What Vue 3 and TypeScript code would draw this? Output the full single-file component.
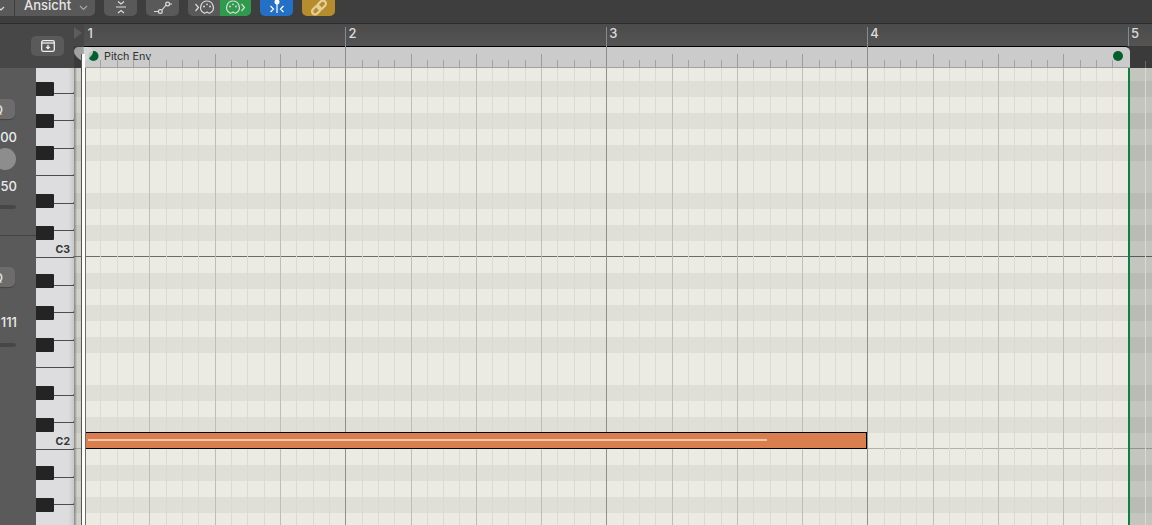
<script setup lang="ts">
const START = 84.6
const STEP = 16.32
const CANVAS_X = 74
const CANVAS_Y = 68

const gridX = (i: number) => Math.floor(START + STEP * i)

// 16th lines in the note grid, the one at index 64 is the green end marker
const gridLines = Array.from({ length: 66 }, (_, i) => i)
  .filter((i) => i !== 64)
  .map((i) => ({
    i,
    left: gridX(i) - CANVAS_X,
    kind: i % 16 === 0 ? 'bar' : i % 4 === 0 ? 'beat' : 'sixteenth',
  }))

const headerTicks = Array.from({ length: 63 }, (_, i) => i + 1).map((i) => ({
  i,
  left: gridX(i) - 84,
  kind: i % 16 === 0 ? 'bar' : i % 4 === 0 ? 'beat' : 'sixteenth',
}))

const DARK_ROWS = [1, 3, 6, 8, 10]
const rows = Array.from({ length: 29 }, (_, i) => {
  const y = 65 + i * 16
  const n = (((257 - y - 16) / 16) % 12 + 12) % 12
  const top = Math.max(y, CANVAS_Y)
  const bottom = Math.min(y + 16, 525)
  return {
    y,
    height: bottom - top,
    dark: DARK_ROWS.includes(n),
    c3: y === 241,
    c2: y === 433,
  }
})

const keyLines = [93, 120, 148, 175, 203, 230, 257, 285, 312, 340, 367, 395, 422, 449, 477, 504]
const labels: Record<number, string> = { 257: 'C3', 449: 'C2' }
const whiteKeys = keyLines.map((line, i) => ({
  line,
  height: line + 1 - (i === 0 ? CANVAS_Y : keyLines[i - 1] + 1),
  label: labels[line] ?? '',
}))
const lastKeyHeight = 525 - 505

const blackKeys = [82, 114, 146, 194, 226, 274, 306, 338, 386, 418, 466, 498].map((y) => y - CANVAS_Y)
const bars = ['1', '2', '3', '4', '5']
const plugPath = 'M-3 5.500C-6 4-7 1-6-2C-5-5-2.500-6.500 0-6.500C2.500-6.500 5-5 6-2C7 1 6 4 3 5.500C2 6.200 1 5 0 4.500C-1 5-2 6.200-3 5.500z'
</script>

<template>
  <div class="app">
    <header class="toolbar">
      <div class="btn-group view-group">
        <div class="seg seg-prev">
          <svg width="8" height="5" viewBox="0 0 8 5"><path d="M1 1l3 3 3-3" class="ic" /></svg>
        </div>
        <div class="seg seg-view">
          <span>Ansicht</span>
          <svg width="9" height="6" viewBox="0 0 9 6"><path d="M1 1l3.500 3.500L8 1" class="ic dim" /></svg>
        </div>
      </div>

      <button class="btn">
        <svg width="16" height="16" viewBox="0 0 16 16">
          <path d="M5 1.500l3 2.500 3-2.500M3 7h10M5 13l3-2.500 3 2.500" class="ic" />
        </svg>
      </button>
      <button class="btn">
        <svg width="20" height="14" viewBox="0 0 20 14">
          <path d="M1 10.500h4.500M9 9l4-5M16.500 3H19" class="ic" />
          <circle cx="7.300" cy="10.500" r="1.900" class="ic" />
          <circle cx="14.600" cy="3" r="1.900" class="ic" />
        </svg>
      </button>

      <div class="btn-group">
        <div class="seg seg-midi">
          <svg width="32" height="16" viewBox="0 0 32 16">
            <path d="M7.500 4l3 3.500-3 3.500" class="ic" />
            <g transform="translate(19 7.500)">
              <path :d="plugPath" class="ic" />
              <circle cx="-3" cy="-1" r="0.900" class="dot" />
              <circle cx="0" cy="-3.200" r="0.900" class="dot" />
              <circle cx="3" cy="-1" r="0.900" class="dot" />
            </g>
          </svg>
        </div>
        <div class="seg seg-green">
          <svg width="31" height="16" viewBox="0 0 31 16">
            <g transform="translate(13 7.500)">
              <path :d="plugPath" class="ic" />
              <circle cx="-3" cy="-1" r="0.900" class="dot" />
              <circle cx="0" cy="-3.200" r="0.900" class="dot" />
              <circle cx="3" cy="-1" r="0.900" class="dot" />
            </g>
            <path d="M21.500 4l3 3.500-3 3.500" class="ic" />
          </svg>
        </div>
      </div>

      <button class="btn btn-blue">
        <svg width="16" height="16" viewBox="0 0 16 16">
          <circle cx="8" cy="2" r="2.500" class="dot white" />
          <path d="M8 3v10M1.500 6l3 3-3 3M14.500 6l-3 3 3 3" class="ic white" />
        </svg>
      </button>
      <button class="btn btn-gold">
        <svg width="20" height="16" viewBox="0 0 20 16">
          <g transform="rotate(-45 10 7.500)" class="link">
            <rect x="1.500" y="4.500" width="9.500" height="6" rx="3" />
            <rect x="9" y="4.500" width="9.500" height="6" rx="3" />
          </g>
        </svg>
      </button>
    </header>

    <section class="top-row">
      <div class="top-left">
        <button class="tray-btn">
          <svg width="14" height="12" viewBox="0 0 14 12">
            <rect x="0.700" y="0.700" width="12.600" height="10.600" rx="1.500" class="ic strong" />
            <path d="M1 3h12" class="ic strong" />
            <path d="M7 4.800v3.700M5.200 6.900L7 8.700l1.800-1.800" class="ic strong" />
          </svg>
        </button>
        <i class="cycle-arrow" />
        <i class="corner" />
      </div>
      <div class="top-right">
        <div class="ruler">
          <div v-for="b in bars" :key="b" class="ruler-cell" :class="{ first: b === '1' }">{{ b }}</div>
        </div>
        <div class="region-row">
          <div class="region">
            <span class="region-dot end" />
            <span class="region-name">Pitch Env</span>
            <i
              v-for="t in headerTicks"
              :key="t.i"
              class="tick"
              :class="t.kind"
              :style="{ left: t.left + 'px' }"
            />
          </div>
          <i class="outside-tick" />
        </div>
      </div>
    </section>

    <section class="body-row">
      <aside class="sidebar">
        <div class="q-btn"><span>Q</span></div>
        <div class="value first-value">00</div>
        <div class="knob" />
        <div class="value second-value">50</div>
        <div class="slider" />
        <div class="divider" />
        <div class="q-btn second-q"><span>Q</span></div>
        <div class="value third-value">111</div>
        <div class="slider last-slider" />
      </aside>

      <div class="keyboard">
        <div
          v-for="k in whiteKeys"
          :key="k.line"
          class="white-key"
          :style="{ height: k.height + 'px' }"
        >
          <span v-if="k.label" class="key-label">{{ k.label }}</span>
        </div>
        <div class="white-key last" :style="{ height: lastKeyHeight + 'px' }" />
        <div v-for="y in blackKeys" :key="y" class="black-key" :style="{ top: y + 'px' }" />
      </div>

      <div class="canvas">
        <div
          v-for="r in rows"
          :key="r.y"
          class="row"
          :class="{ dark: r.dark, c3: r.c3, c2: r.c2 }"
          :style="{ height: r.height + 'px' }"
        />
        <i class="gutter" />
        <i class="outside" />
        <i
          v-for="l in gridLines"
          :key="l.i"
          class="vline"
          :class="l.kind"
          :style="{ left: l.left + 'px' }"
        />
        <i class="end-line" />
        <div class="note"><i class="note-pitch" /></div>
      </div>
    </section>

    <svg class="playhead" width="26" height="478" viewBox="0 0 26 478">
      <circle cx="19.500" cy="9" r="5" fill="#00612f" />
      <path d="M0 4.500C0 2 2 0 4.500 0h10C17 0 19 2 19 4.500c0 4-5 7.500-9.500 11C5 12 0 8.500 0 4.500z" fill="#c4c4c4" fill-opacity="0.75" />
      <path d="M9.500 0h5C17 0 19 2 19 4.500c0 4-5 7.500-9.500 11z" fill="#e8e8e8" fill-opacity="0.45" />
      <rect x="7" y="7" width="1" height="471" fill="#55554f" />
      <rect x="8" y="7" width="3" height="471" fill="#fff" />
      <rect x="11" y="21" width="1" height="457" fill="#6c6c68" />
    </svg>
  </div>
</template>

<style>
html,
body {
  margin: 0;
  background: #3d3d3d;
}
</style>

<style scoped>
.app {
  position: relative;
  width: 1152px;
  height: 525px;
  overflow: hidden;
  display: flex;
  flex-direction: column;
  font-family: Inter, "Liberation Sans", sans-serif;
  background: #3d3d3d;
  color: #e6e6e6;
}

.toolbar {
  flex: 0 0 24px;
  box-sizing: border-box;
  display: flex;
  gap: 9px;
  border-bottom: 1px solid #2b2b2b;
  background: #3e3e3e;
}

.btn-group {
  display: flex;
  height: 16px;
  border-radius: 0 0 5px 5px;
  overflow: hidden;
}

.view-group {
  margin-left: -20px;
  gap: 1px;
}

.seg {
  height: 16px;
  display: flex;
  align-items: center;
  justify-content: center;
  background: #595959;
}

.seg-prev {
  width: 34px;
  justify-content: flex-end;
  padding-right: 9px;
  box-sizing: border-box;
}

.seg-view {
  width: 80px;
  box-sizing: border-box;
  justify-content: space-between;
  padding: 0 7px 0 9px;
  font-size: 13px;
  font-weight: 500;
  line-height: 11px;
}

.seg-view span {
  margin-top: -6px;
}

.seg-midi {
  width: 32px;
}

.seg-green {
  width: 31px;
  background: #2f9a4b;
}

.btn {
  width: 33px;
  height: 16px;
  padding: 0;
  border: 0;
  border-radius: 0 0 5px 5px;
  background: #595959;
  display: flex;
  align-items: center;
  justify-content: center;
}

.btn-blue {
  background: #2470c6;
}

.btn-gold {
  background: #b78c2c;
}

.ic {
  fill: none;
  stroke: #dcdcdc;
  stroke-width: 1.200;
}

.ic.dim {
  stroke: #a8a8a8;
}

.ic.white {
  stroke: #fff;
}

.ic.strong {
  stroke: #f0f0f0;
  stroke-width: 1.300;
}

.dot {
  fill: #dcdcdc;
}

.dot.white {
  fill: #fff;
}

.link rect {
  fill: none;
  stroke: #e3cf97;
  stroke-width: 2.300;
}

.top-row {
  flex: 0 0 44px;
  display: flex;
}

.top-left {
  position: relative;
  flex: 0 0 84px;
  box-sizing: border-box;
  padding: 12px 0 0 31px;
  background: #474747;
}

.tray-btn {
  display: flex;
  align-items: center;
  justify-content: center;
  width: 33px;
  height: 20px;
  padding: 0;
  border: 0;
  border-radius: 5px;
  background: #5a5a5a;
}

.cycle-arrow {
  position: absolute;
  left: 74px;
  top: 3px;
  border-style: solid;
  border-width: 6.500px 0 6.500px 8px;
  border-color: transparent transparent transparent #5c5c5c;
}

.corner {
  position: absolute;
  left: 74px;
  right: 0;
  top: 22px;
  bottom: 0;
  background: #3b3b3b;
}

.top-right {
  flex: 1;
  display: flex;
  flex-direction: column;
}

.ruler {
  flex: 0 0 22px;
  display: flex;
  background: linear-gradient(#4b4b4b, #545454);
  border-left: 1px dotted #222;
  margin-left: -1px;
}

.ruler-cell {
  position: relative;
  flex: 0 0 260.900px;
  box-sizing: border-box;
  padding: 1px 0 0 3.500px;
  font-size: 13px;
  font-weight: 500;
  line-height: 16px;
  color: #dcdcdc;
}

.ruler-cell::before {
  content: "";
  position: absolute;
  left: 0;
  top: 3px;
  bottom: 0;
  width: 1px;
  background: #8a8a8a;
}

.ruler-cell.first::before {
  display: none;
}

.region-row {
  position: relative;
  flex: 0 0 22px;
  display: flex;
  background: #3a3a3a;
}

.region {
  position: relative;
  flex: 0 0 1046px;
  box-sizing: border-box;
  border-top: 1px solid #000;
  border-bottom: 1px solid #a2a29b;
  border-top-right-radius: 5px;
  background: #cbcbcb;
}

.region-name {
  position: absolute;
  left: 20px;
  top: 2px;
  font-size: 10.800px;
  line-height: 15px;
  color: #2e2e2e;
}

.region-dot {
  position: absolute;
  top: 4px;
  width: 10px;
  height: 10px;
  border-radius: 50%;
  background: #00612f;
}

.region-dot.end {
  right: 7px;
}

.tick {
  position: absolute;
  bottom: 0;
  width: 1px;
  height: 7px;
  background: #a2a29f;
}

.tick.beat {
  height: 13px;
  background: #9c9c99;
}

.tick.bar {
  height: 21px;
  background: #8c8c89;
}

.outside-tick {
  position: absolute;
  left: 1061px;
  bottom: 0;
  width: 1px;
  height: 7px;
  background: #6a6a6a;
}

.body-row {
  flex: 1;
  min-height: 0;
  display: flex;
}

.sidebar {
  flex: 0 0 36px;
  overflow: hidden;
  padding-top: 31px;
  background: #5a5a5a;
}

.q-btn {
  width: 15px;
  height: 20px;
  overflow: hidden;
  display: flex;
  align-items: center;
  justify-content: flex-end;
  border-radius: 0 5px 5px 0;
  background: #6c6c6c;
  box-shadow: 0 1px 1px rgba(0, 0, 0, 0.25);
  font-size: 12px;
  font-weight: 500;
}

.q-btn span {
  margin-right: 12px;
}

.second-q {
  margin-top: 31px;
}

.value {
  width: 17px;
  height: 16px;
  display: flex;
  justify-content: flex-end;
  font-size: 13px;
  font-weight: 500;
  line-height: 16px;
  color: #ececec;
}

.first-value {
  margin-top: 10px;
}

.second-value {
  margin-top: 8px;
}

.third-value {
  margin-top: 27px;
}

.knob {
  width: 22px;
  height: 22px;
  margin: 3px 0 0 -6px;
  border-radius: 50%;
  background: #8d8d8d;
}

.slider {
  width: 16px;
  height: 4px;
  margin-top: 11px;
  border-radius: 0 2px 2px 0;
  background: #474747;
}

.last-slider {
  margin-top: 13px;
}

.divider {
  height: 1px;
  margin-top: 26px;
  background: #444;
}

.keyboard {
  position: relative;
  flex: 0 0 38px;
  overflow: hidden;
  background: #dcdcdf;
}

.white-key {
  position: relative;
  box-sizing: border-box;
  display: flex;
  align-items: flex-end;
  justify-content: flex-end;
  padding-right: 4px;
  border-bottom: 1px solid #4d4d4d;
  background: linear-gradient(90deg, #dddde0 85%, #c9c9cb);
}

.white-key.last {
  border-bottom: 0;
}

.white-key::after {
  content: "";
  position: absolute;
  right: 0;
  bottom: -3px;
  border-style: solid;
  border-width: 2.500px 2px 2.500px 0;
  border-color: transparent #4d4d4d transparent transparent;
}

.white-key.last::after {
  display: none;
}

.key-label {
  font-size: 10.500px;
  font-weight: 700;
  line-height: 15px;
  color: #353535;
}

.black-key {
  position: absolute;
  left: 0;
  width: 18px;
  height: 14px;
  border-radius: 0 1px 1px 0;
  background: #242424;
}

.canvas {
  position: relative;
  flex: 1;
  overflow: hidden;
  display: flex;
  flex-direction: column;
}

.row {
  flex: none;
  box-sizing: border-box;
  background: #ebebe4;
}

.row.dark {
  background: #dfdfd8;
}

.row.c3 {
  border-bottom: 1px solid #6c6c69;
}

.row.c2 {
  border-bottom: 1px solid #b1b1aa;
}

.gutter {
  position: absolute;
  left: 0;
  top: 0;
  bottom: 0;
  width: 7px;
  background: linear-gradient(90deg, rgba(70, 70, 66, 0.6), rgba(120, 120, 112, 0.22) 45%);
}

.outside {
  position: absolute;
  left: 1056px;
  right: 0;
  top: 0;
  bottom: 0;
  background: rgba(0, 0, 0, 0.16);
}

.vline {
  position: absolute;
  top: 0;
  bottom: 0;
  width: 1px;
  background: #dadad3;
}

.vline.beat {
  background: #bebeb8;
}

.vline.bar {
  background: #8f8f8b;
}

.end-line {
  position: absolute;
  left: 1054px;
  top: 0;
  bottom: 0;
  width: 2px;
  background: #0a8048;
}

.note {
  position: absolute;
  left: 11px;
  top: 364px;
  box-sizing: border-box;
  width: 782px;
  height: 17px;
  border: 1px solid #000;
  background: #d97e4e;
}

.note-pitch {
  position: absolute;
  left: 2px;
  top: 6px;
  width: 679px;
  height: 2px;
  background: #f4c6a8;
}

.playhead {
  position: absolute;
  left: 74px;
  top: 47px;
}
</style>
